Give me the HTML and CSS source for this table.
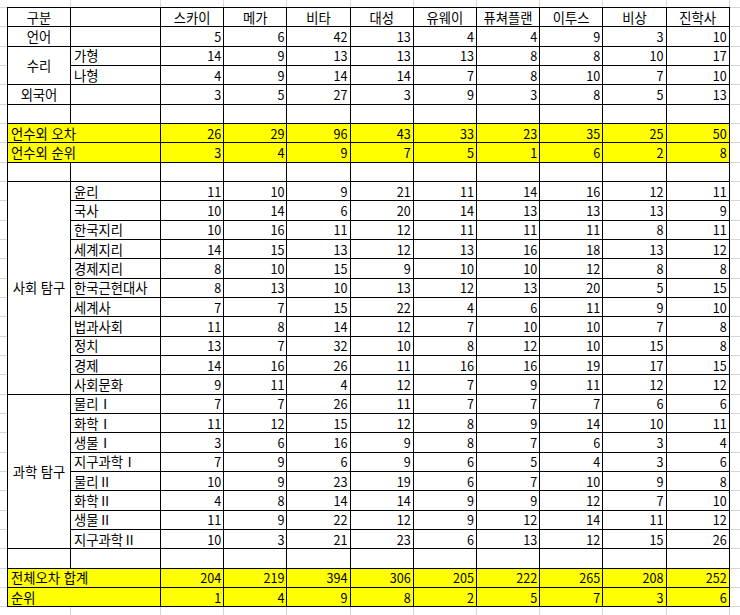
FILE: index.html
```html
<!DOCTYPE html>
<html lang="ko">
<head>
<meta charset="utf-8">
<title>오차 비교표</title>
<link rel="stylesheet" href="styles.css">
</head>
<body>
<div class="sheet">
  <div class="row"><div class="c g">구분</div><div class="c l"></div><div class="c h">스카이</div><div class="c h">메가</div><div class="c h">비타</div><div class="c h">대성</div><div class="c h">유웨이</div><div class="c h">퓨쳐플랜</div><div class="c h">이투스</div><div class="c h">비상</div><div class="c h">진학사</div></div>
  <div class="row"><div class="c g">언어</div><div class="c l"></div><div class="c n">5</div><div class="c n">6</div><div class="c n">42</div><div class="c n">13</div><div class="c n">4</div><div class="c n">4</div><div class="c n">9</div><div class="c n">3</div><div class="c n">10</div></div>
  <div class="row"><div class="c g r2">수리</div><div class="c l">가형</div><div class="c n">14</div><div class="c n">9</div><div class="c n">13</div><div class="c n">13</div><div class="c n">13</div><div class="c n">8</div><div class="c n">8</div><div class="c n">10</div><div class="c n">17</div></div>
  <div class="row"><div class="c l">나형</div><div class="c n">4</div><div class="c n">9</div><div class="c n">14</div><div class="c n">14</div><div class="c n">7</div><div class="c n">8</div><div class="c n">10</div><div class="c n">7</div><div class="c n">10</div></div>
  <div class="row"><div class="c g">외국어</div><div class="c l"></div><div class="c n">3</div><div class="c n">5</div><div class="c n">27</div><div class="c n">3</div><div class="c n">9</div><div class="c n">3</div><div class="c n">8</div><div class="c n">5</div><div class="c n">13</div></div>
  <div class="row"><div class="c g"></div><div class="c l"></div><div class="c n"></div><div class="c n"></div><div class="c n"></div><div class="c n"></div><div class="c n"></div><div class="c n"></div><div class="c n"></div><div class="c n"></div><div class="c n"></div></div>
  <div class="row hl"><div class="c l w">언수외 오차</div><div class="c n">26</div><div class="c n">29</div><div class="c n">96</div><div class="c n">43</div><div class="c n">33</div><div class="c n">23</div><div class="c n">35</div><div class="c n">25</div><div class="c n">50</div></div>
  <div class="row hl"><div class="c l w">언수외 순위</div><div class="c n">3</div><div class="c n">4</div><div class="c n">9</div><div class="c n">7</div><div class="c n">5</div><div class="c n">1</div><div class="c n">6</div><div class="c n">2</div><div class="c n">8</div></div>
  <div class="row"><div class="c g"></div><div class="c l"></div><div class="c n"></div><div class="c n"></div><div class="c n"></div><div class="c n"></div><div class="c n"></div><div class="c n"></div><div class="c n"></div><div class="c n"></div><div class="c n"></div></div>

  <div class="row"><div class="c g r11">사회 탐구</div><div class="c l">윤리</div><div class="c n">11</div><div class="c n">10</div><div class="c n">9</div><div class="c n">21</div><div class="c n">11</div><div class="c n">14</div><div class="c n">16</div><div class="c n">12</div><div class="c n">11</div></div>
  <div class="row"><div class="c l">국사</div><div class="c n">10</div><div class="c n">14</div><div class="c n">6</div><div class="c n">20</div><div class="c n">14</div><div class="c n">13</div><div class="c n">13</div><div class="c n">13</div><div class="c n">9</div></div>
  <div class="row"><div class="c l">한국지리</div><div class="c n">10</div><div class="c n">16</div><div class="c n">11</div><div class="c n">12</div><div class="c n">11</div><div class="c n">11</div><div class="c n">11</div><div class="c n">8</div><div class="c n">11</div></div>
  <div class="row"><div class="c l">세계지리</div><div class="c n">14</div><div class="c n">15</div><div class="c n">13</div><div class="c n">12</div><div class="c n">13</div><div class="c n">16</div><div class="c n">18</div><div class="c n">13</div><div class="c n">12</div></div>
  <div class="row"><div class="c l">경제지리</div><div class="c n">8</div><div class="c n">10</div><div class="c n">15</div><div class="c n">9</div><div class="c n">10</div><div class="c n">10</div><div class="c n">12</div><div class="c n">8</div><div class="c n">8</div></div>
  <div class="row"><div class="c l">한국근현대사</div><div class="c n">8</div><div class="c n">13</div><div class="c n">10</div><div class="c n">13</div><div class="c n">12</div><div class="c n">13</div><div class="c n">20</div><div class="c n">5</div><div class="c n">15</div></div>
  <div class="row"><div class="c l">세계사</div><div class="c n">7</div><div class="c n">7</div><div class="c n">15</div><div class="c n">22</div><div class="c n">4</div><div class="c n">6</div><div class="c n">11</div><div class="c n">9</div><div class="c n">10</div></div>
  <div class="row"><div class="c l">법과사회</div><div class="c n">11</div><div class="c n">8</div><div class="c n">14</div><div class="c n">12</div><div class="c n">7</div><div class="c n">10</div><div class="c n">10</div><div class="c n">7</div><div class="c n">8</div></div>
  <div class="row"><div class="c l">정치</div><div class="c n">13</div><div class="c n">7</div><div class="c n">32</div><div class="c n">10</div><div class="c n">8</div><div class="c n">12</div><div class="c n">10</div><div class="c n">15</div><div class="c n">8</div></div>
  <div class="row"><div class="c l">경제</div><div class="c n">14</div><div class="c n">16</div><div class="c n">26</div><div class="c n">11</div><div class="c n">16</div><div class="c n">16</div><div class="c n">19</div><div class="c n">17</div><div class="c n">15</div></div>
  <div class="row"><div class="c l">사회문화</div><div class="c n">9</div><div class="c n">11</div><div class="c n">4</div><div class="c n">12</div><div class="c n">7</div><div class="c n">9</div><div class="c n">11</div><div class="c n">12</div><div class="c n">12</div></div>

  <div class="row"><div class="c g r8">과학 탐구</div><div class="c l">물리Ⅰ</div><div class="c n">7</div><div class="c n">7</div><div class="c n">26</div><div class="c n">11</div><div class="c n">7</div><div class="c n">7</div><div class="c n">7</div><div class="c n">6</div><div class="c n">6</div></div>
  <div class="row"><div class="c l">화학Ⅰ</div><div class="c n">11</div><div class="c n">12</div><div class="c n">15</div><div class="c n">12</div><div class="c n">8</div><div class="c n">9</div><div class="c n">14</div><div class="c n">10</div><div class="c n">11</div></div>
  <div class="row"><div class="c l">생물Ⅰ</div><div class="c n">3</div><div class="c n">6</div><div class="c n">16</div><div class="c n">9</div><div class="c n">8</div><div class="c n">7</div><div class="c n">6</div><div class="c n">3</div><div class="c n">4</div></div>
  <div class="row"><div class="c l">지구과학Ⅰ</div><div class="c n">7</div><div class="c n">9</div><div class="c n">6</div><div class="c n">9</div><div class="c n">6</div><div class="c n">5</div><div class="c n">4</div><div class="c n">3</div><div class="c n">6</div></div>
  <div class="row"><div class="c l">물리Ⅱ</div><div class="c n">10</div><div class="c n">9</div><div class="c n">23</div><div class="c n">19</div><div class="c n">6</div><div class="c n">7</div><div class="c n">10</div><div class="c n">9</div><div class="c n">8</div></div>
  <div class="row"><div class="c l">화학Ⅱ</div><div class="c n">4</div><div class="c n">8</div><div class="c n">14</div><div class="c n">14</div><div class="c n">9</div><div class="c n">9</div><div class="c n">12</div><div class="c n">7</div><div class="c n">10</div></div>
  <div class="row"><div class="c l">생물Ⅱ</div><div class="c n">11</div><div class="c n">9</div><div class="c n">22</div><div class="c n">12</div><div class="c n">9</div><div class="c n">12</div><div class="c n">14</div><div class="c n">11</div><div class="c n">12</div></div>
  <div class="row"><div class="c l">지구과학Ⅱ</div><div class="c n">10</div><div class="c n">3</div><div class="c n">21</div><div class="c n">23</div><div class="c n">6</div><div class="c n">13</div><div class="c n">12</div><div class="c n">15</div><div class="c n">26</div></div>
  <div class="row"><div class="c g"></div><div class="c l"></div><div class="c n"></div><div class="c n"></div><div class="c n"></div><div class="c n"></div><div class="c n"></div><div class="c n"></div><div class="c n"></div><div class="c n"></div><div class="c n"></div></div>

  <div class="row hl"><div class="c l w">전체오차 합계</div><div class="c n">204</div><div class="c n">219</div><div class="c n">394</div><div class="c n">306</div><div class="c n">205</div><div class="c n">222</div><div class="c n">265</div><div class="c n">208</div><div class="c n">252</div></div>
  <div class="row hl"><div class="c l w">순위</div><div class="c n">1</div><div class="c n">4</div><div class="c n">9</div><div class="c n">8</div><div class="c n">2</div><div class="c n">5</div><div class="c n">7</div><div class="c n">3</div><div class="c n">6</div></div>
</div>
</body>
</html>
```

FILE: styles.css
```css
* {
  box-sizing: border-box;
}

html,
body {
  margin: 0;
  padding: 0;
}

body {
  width: 740px;
  height: 615px;
  overflow: hidden;
  font-family: "Noto Sans CJK KR", "Noto Sans", sans-serif;
  font-size: 13.3px;
  color: #000;
  background-color: #fff;
  /* spreadsheet gridlines peeking out around the bordered table */
  background-image:
    linear-gradient(#d6d6d6, #d6d6d6),
    repeating-linear-gradient(to right, #d6d6d6 0 1px, transparent 1px 63.2px),
    repeating-linear-gradient(to bottom, transparent 0 7px, #d6d6d6 7px 8px, transparent 8px 19.335px);
  background-size: 1px 100%, 600px 100%, 100% 100%;
  background-position: 70px 0, 160px 0, 0 0;
  background-repeat: no-repeat;
}

.sheet {
  display: grid;
  grid-template-columns: 63px 90px repeat(9, 63.2px);
  grid-template-rows: repeat(31, 19.335px);
  width: max-content;
  margin: 7px 0 0 7px;
  border-top: 1px solid #000;
  border-left: 1px solid #000;
  background: #fff;
}

.row {
  display: contents;
}

.c {
  display: flex;
  align-items: center;
  min-width: 0;
  padding: 1px 2px 0 3px;
  line-height: 18px;
  white-space: nowrap;
  overflow: hidden;
  border-right: 1px solid #000;
  border-bottom: 1px solid #000;
}

.g {
  justify-content: center;
  padding-left: 0;
  padding-right: 0;
}

.h {
  justify-content: center;
  padding-left: 0;
  padding-right: 0;
}

.l {
  justify-content: flex-start;
}

.n {
  justify-content: flex-end;
  font-size: 12.6px;
}

.r2 {
  grid-row: span 2;
}

.r11 {
  grid-row: span 11;
}

.r8 {
  grid-row: span 8;
}

.w {
  grid-column: span 2;
}

.hl .c {
  background: #ffff00;
}
```
